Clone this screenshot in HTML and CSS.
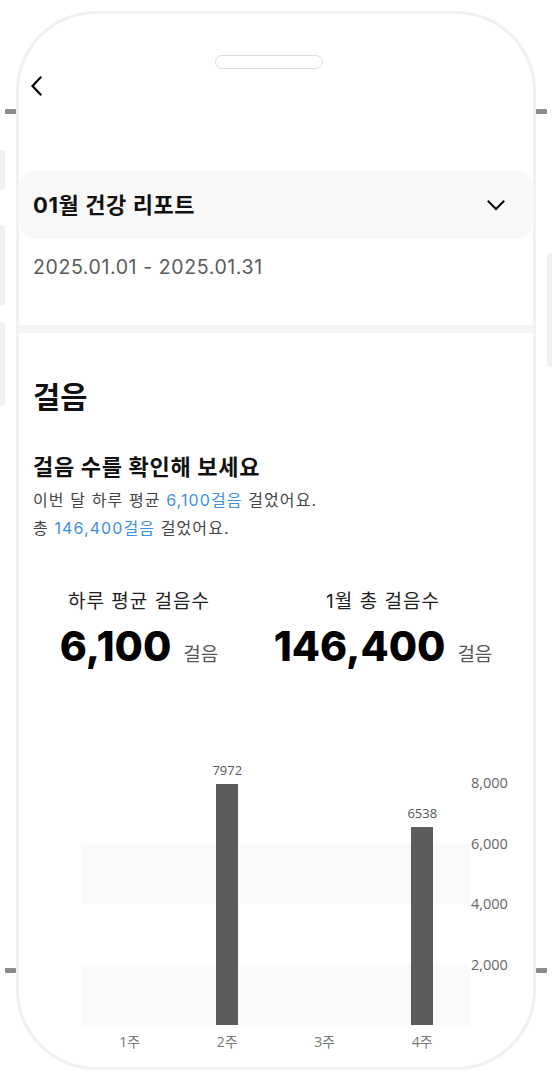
FILE: index.html
```html
<!DOCTYPE html>
<html lang="ko">
<head>
<meta charset="utf-8">
<title>01월 건강 리포트</title>
<link rel="stylesheet" href="styles.css">
</head>
<body>
<div class="device">
  <span class="side-key key-lt"></span>
  <span class="side-key key-rt"></span>
  <span class="side-key key-lb"></span>
  <span class="side-key key-rb"></span>
  <span class="side-bar bar-l1"></span>
  <span class="side-bar bar-l2"></span>
  <span class="side-bar bar-l3"></span>
  <span class="side-bar bar-r1"></span>

  <div class="phone">
    <div class="notch"></div>
    <div class="nav">
      <svg class="back" width="24" height="24" viewBox="0 0 24 24"><path d="M15.5 3.5 L7.5 12 L15.5 20.5" fill="none" stroke="#000" stroke-width="2.2" stroke-linecap="square"/></svg>
    </div>

    <div class="report-card">
      <h1 class="report-title">01월 건강 리포트</h1>
      <svg class="chev" width="24" height="24" viewBox="0 0 24 24"><path d="M4.5 8.5 L12 16 L19.5 8.5" fill="none" stroke="#000" stroke-width="2" stroke-linecap="square"/></svg>
    </div>
    <p class="period">2025.01.01 - 2025.01.31</p>
    <div class="divider"></div>

    <section class="steps">
      <h2 class="steps-title">걸음</h2>
      <h3 class="steps-sub">걸음 수를 확인해 보세요</h3>
      <p class="desc">이번 달 하루 평균 <em>6,100걸음</em> 걸었어요.<br>총 <em>146,400걸음</em> 걸었어요.</p>

      <div class="stats">
        <div class="stat">
          <div class="stat-label">하루 평균 걸음수</div>
          <div class="stat-value"><strong>6,100</strong><span>걸음</span></div>
        </div>
        <div class="stat">
          <div class="stat-label">1월 총 걸음수</div>
          <div class="stat-value"><strong>146,400</strong><span>걸음</span></div>
        </div>
      </div>

      <div class="chart">
        <div class="chart-main">
          <div class="plot">
            <div class="col"></div>
            <div class="col"><span class="val">7972</span><span class="bar" style="height:241px"></span></div>
            <div class="col"></div>
            <div class="col"><span class="val">6538</span><span class="bar" style="height:198px"></span></div>
          </div>
          <div class="xaxis">
            <span>1주</span><span>2주</span><span>3주</span><span>4주</span>
          </div>
        </div>
        <div class="yaxis">
          <span>8,000</span><span>6,000</span><span>4,000</span><span>2,000</span>
        </div>
      </div>
    </section>
  </div>
</div>
</body>
</html>
```

FILE: styles.css
```css
* { box-sizing: border-box; }
html, body {
  margin: 0;
  padding: 0;
  background: #fff;
}
body {
  width: 552px;
  height: 1080px;
  overflow: hidden;
  font-family: "Inter", "Noto Sans CJK KR", sans-serif;
  color: #111;
}
.device {
  position: relative;
  width: 552px;
  height: 1080px;
  padding: 11px 16px 0;
}
.side-key {
  position: absolute;
  width: 11px;
  height: 5px;
  background: #8a8a8a;
  border-radius: 1px;
}
.key-lt { left: 5px; top: 109px; }
.key-rt { left: 536px; top: 109px; }
.key-lb { left: 5px; top: 968px; }
.key-rb { left: 536px; top: 968px; }
.side-bar {
  position: absolute;
  width: 5px;
  background: #f1f1f1;
  border-radius: 0 3px 3px 0;
}
.bar-l1 { left: 0; top: 150px; height: 40px; }
.bar-l2 { left: 0; top: 225px; height: 80px; }
.bar-l3 { left: 0; top: 323px; height: 82px; }
.bar-r1 { left: 547px; top: 253px; height: 114px; border-radius: 3px 0 0 3px; }

.phone {
  width: 520px;
  height: 1059px;
  border: 3px solid #f0f0f0;
  border-radius: 80px;
  overflow: hidden;
  background: #fff;
}
.notch {
  margin: 41px 0 0 196px;
  width: 108px;
  height: 14px;
  border: 1px solid #dcdcdc;
  border-radius: 7px;
}
.nav {
  margin-top: 5px;
  height: 24px;
  padding-left: 6px;
}
.back { display: block; }

.report-card {
  margin-top: 73px;
  height: 68px;
  background: #f8f8f8;
  border-radius: 16px;
  display: flex;
  align-items: center;
  justify-content: space-between;
  padding: 0 25px 0 14px;
}
.report-title {
  margin: 0;
  font-size: 22px;
  font-weight: 700;
  letter-spacing: 0.6px;
  line-height: 28px;
}
.chev { display: block; }
.period {
  margin: 16px 0 0;
  padding-left: 14px;
  font-size: 19.5px;
  letter-spacing: 0.6px;
  line-height: 24px;
  color: #5a5a5a;
}
.divider {
  margin-top: 46px;
  height: 8px;
  background: #f4f4f4;
}

.steps { padding: 0 14px; }
.steps-title {
  margin: 47px 0 0;
  font-size: 29.5px;
  line-height: 34px;
  font-weight: 700;
}
.steps-sub {
  margin: 39px 0 0;
  font-size: 22px;
  letter-spacing: 0.7px;
  line-height: 28px;
  font-weight: 700;
}
.desc {
  margin: 5px 0 0;
  font-size: 16px;
  letter-spacing: 1.1px;
  line-height: 28px;
  color: #444;
}
.desc em {
  font-style: normal;
  color: #3d8fe0;
}

.stats {
  margin-top: 47px;
  display: grid;
  grid-template-columns: 244px 244px;
  margin-left: -16px;
}
.stat { text-align: center; }
.stat-label {
  font-size: 19px;
  letter-spacing: 1px;
  line-height: 26px;
  color: #222;
}
.stat-value {
  margin-top: 7px;
  height: 48px;
  line-height: 48px;
  display: flex;
  justify-content: center;
  align-items: baseline;
  gap: 12px;
}
.stat-value strong {
  font-size: 41px;
  font-weight: 800;
  color: #000;
}
.stat-value span {
  font-size: 19px;
  color: #555;
}

.chart {
  margin: 90px 0 0 48px;
  padding-top: 23px;
  display: flex;
  font-family: "Open Sans", "Noto Sans CJK KR", sans-serif;
}
.chart-main { width: 390px; }
.plot {
  height: 242px;
  display: grid;
  grid-template-columns: repeat(4, 1fr);
  grid-template-rows: 242px;
  background: linear-gradient(to bottom,
    #fff 0, #fff 61px,
    #fafafa 61px, #fafafa 121px,
    #fff 121px, #fff 182px,
    #fafafa 182px, #fafafa 242px);
}
.col {
  min-height: 0;
  display: flex;
  flex-direction: column;
  justify-content: flex-end;
  align-items: center;
}
.val {
  flex: none;
  font-size: 13px;
  line-height: 16px;
  color: #555;
  margin-bottom: 6px;
}
.bar {
  flex: none;
  display: block;
  width: 22px;
  background: #5c5c5c;
}
.xaxis {
  margin-top: 7px;
  display: grid;
  grid-template-columns: repeat(4, 1fr);
  text-align: center;
  font-size: 14px;
  line-height: 20px;
  color: #777;
}
.yaxis {
  display: flex;
  flex-direction: column;
  font-size: 14.5px;
  color: #666;
}
.yaxis span {
  height: 60.5px;
  line-height: 18px;
  margin-top: -9px;
  margin-bottom: 9px;
}
```
